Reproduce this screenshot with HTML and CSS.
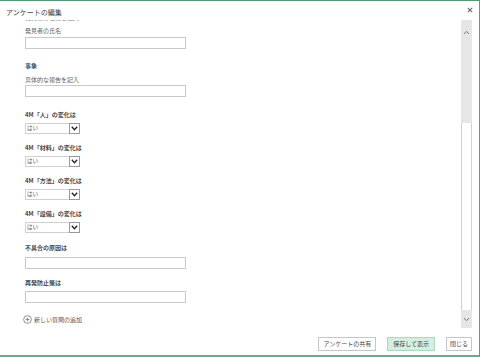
FILE: index.html
```html
<!DOCTYPE html>
<html lang="ja">
<head>
<meta charset="utf-8">
<title>アンケートの編集</title>
<link rel="stylesheet" href="styles.css">
</head>
<body>
<div class="dialog">
  <div class="header">
    <div class="title">アンケートの編集</div>
    <div class="close">
      <svg width="6" height="6" viewBox="0 0 6 6"><path d="M0.8 0.8 L5.2 5.2 M5.2 0.8 L0.8 5.2" stroke="#666" stroke-width="1.1" fill="none"/></svg>
    </div>
  </div>
  <div class="main">
    <div class="content">
      <div class="desc clipped">発見者の名前を記入</div>
      <div class="desc first">発見者の氏名</div>
      <div class="input m2"></div>

      <div class="label m13">事象</div>
      <div class="desc m6">具体的な報告を記入</div>
      <div class="input m1"></div>

      <div class="label m14">4M「人」の変化は</div>
      <div class="select"><span class="value">はい</span><span class="arrow"><svg width="7" height="5" viewBox="0 0 7 5"><path d="M0.8 0.8 L3.5 3.8 L6.2 0.8" stroke="#222" stroke-width="1.3" fill="none"/></svg></span></div>

      <div class="label m10">4M「材料」の変化は</div>
      <div class="select"><span class="value">はい</span><span class="arrow"><svg width="7" height="5" viewBox="0 0 7 5"><path d="M0.8 0.8 L3.5 3.8 L6.2 0.8" stroke="#222" stroke-width="1.3" fill="none"/></svg></span></div>

      <div class="label m10">4M「方法」の変化は</div>
      <div class="select"><span class="value">はい</span><span class="arrow"><svg width="7" height="5" viewBox="0 0 7 5"><path d="M0.8 0.8 L3.5 3.8 L6.2 0.8" stroke="#222" stroke-width="1.3" fill="none"/></svg></span></div>

      <div class="label m10">4M「設備」の変化は</div>
      <div class="select"><span class="value">はい</span><span class="arrow"><svg width="7" height="5" viewBox="0 0 7 5"><path d="M0.8 0.8 L3.5 3.8 L6.2 0.8" stroke="#222" stroke-width="1.3" fill="none"/></svg></span></div>

      <div class="label m11">不具合の原因は</div>
      <div class="input m5"></div>

      <div class="label m10">再発防止策は</div>
      <div class="input m4"></div>

      <div class="add m12">
        <svg width="9" height="9" viewBox="0 0 9 9"><circle cx="4.5" cy="4.5" r="3.9" stroke="#777" stroke-width="0.8" fill="none"/><path d="M4.5 2.6 V6.4 M2.6 4.5 H6.4" stroke="#777" stroke-width="0.8"/></svg>
        <span>新しい質問の追加</span>
      </div>
    </div>
    <div class="scrollbar">
      <div class="sb-top">
        <svg width="7" height="5" viewBox="0 0 7 5"><path d="M1 4 L3.5 1.3 L6 4" stroke="#777" stroke-width="1" fill="none"/></svg>
      </div>
      <div class="sb-track"></div>
      <div class="sb-bottom">
        <svg width="7" height="5" viewBox="0 0 7 5"><path d="M1 1 L3.5 3.7 L6 1" stroke="#777" stroke-width="1" fill="none"/></svg>
      </div>
    </div>
  </div>
  <div class="footer">
    <div class="btn share">アンケートの共有</div>
    <div class="btn save">保存して表示</div>
    <div class="btn close-btn">閉じる</div>
  </div>
</div>
</body>
</html>
```
FILE: styles.css
```css
html, body {
  margin: 0;
  padding: 0;
  background: #ffffff;
}
body {
  font-family: "Noto Sans CJK JP", "Noto Sans", sans-serif;
  color: #444;
}
.dialog {
  width: 480px;
  height: 357px;
  box-sizing: border-box;
  border-top: 1px solid #4f9a70;
  border-right: 1px solid #5aa079;
  border-bottom: 2px solid #6daa88;
  display: flex;
  flex-direction: column;
  overflow: hidden;
}
.header {
  height: 19px;
  display: flex;
  align-items: center;
  justify-content: space-between;
  padding: 0 6px 0 6px;
  flex: none;
}
.title {
  font-size: 7px;
  line-height: 9px;
  color: #444;
  margin-top: 3px;
}
.close {
  width: 6px;
  height: 6px;
  display: flex;
  margin-top: -1px;
}
.close svg { display: block; }
.main {
  flex: none;
  height: 308px;
  display: flex;
}
.content {
  flex: 1;
  overflow: hidden;
  padding-left: 25px;
  display: flex;
  flex-direction: column;
  align-items: flex-start;
}
.desc {
  font-size: 6px;
  line-height: 8px;
  color: #666;
  white-space: nowrap;
}
.label {
  font-size: 6px;
  line-height: 8px;
  font-weight: bold;
  color: #4a4a4a;
  white-space: nowrap;
}
.clipped { margin-top: -6px; color: #777; }
.first { margin-top: 5px; }
.m1 { margin-top: 1px; }
.m2 { margin-top: 2px; }
.m4 { margin-top: 4px; }
.m5 { margin-top: 5px; }
.m6 { margin-top: 6px; }
.m10 { margin-top: 10px; }
.m11 { margin-top: 11px; }
.m12 { margin-top: 12px; }
.m13 { margin-top: 13px; }
.m14 { margin-top: 14px; }
.input {
  width: 161px;
  height: 12px;
  box-sizing: border-box;
  border: 1px solid #c9c9c9;
  background: #fff;
  flex: none;
}
.select {
  margin-top: 4px;
  width: 55px;
  height: 11px;
  box-sizing: border-box;
  border: 1px solid #d0d0d0;
  display: flex;
  align-items: stretch;
  justify-content: space-between;
  flex: none;
}
.select .value {
  font-size: 5.5px;
  line-height: 9px;
  color: #555;
  padding-left: 1px;
}
.select .arrow {
  width: 11px;
  box-sizing: border-box;
  border: 1px solid #9a9a9a;
  margin: -1px -1px -1px 0;
  display: flex;
  align-items: center;
  justify-content: center;
  background: #fff;
}
.select .arrow svg { display: block; }
.add {
  display: flex;
  align-items: center;
  gap: 2px;
  margin-left: -2px;
  font-size: 6px;
  line-height: 8px;
  color: #555;
}
.add svg { display: block; }
.scrollbar {
  width: 11px;
  margin-right: 7px;
  display: flex;
  flex-direction: column;
  flex: none;
}
.sb-top {
  height: 103px;
  background: #e6e6e6;
  display: flex;
  justify-content: center;
  padding-top: 10px;
  box-sizing: border-box;
}
.sb-top svg, .sb-bottom svg { display: block; }
.sb-track {
  flex: 1;
  box-sizing: border-box;
  border: 1px solid #cfcfcf;
  border-top: none;
  border-bottom: none;
  background: #fff;
}
.sb-bottom {
  height: 18px;
  background: #e6e6e6;
  display: flex;
  justify-content: center;
  align-items: center;
}
.footer {
  flex: 1;
  display: flex;
  justify-content: flex-end;
  align-items: flex-start;
  gap: 11px;
  padding: 9px 7px 0 0;
}
.btn {
  height: 14px;
  box-sizing: border-box;
  border: 1px solid #c6c6c6;
  background: #fff;
  font-size: 6px;
  line-height: 12px;
  color: #444;
  padding: 0 4px;
  white-space: nowrap;
}
.btn.save {
  background: #d6eedf;
  border-color: #acd7be;
  padding: 0 5px;
}
.btn.close-btn { padding: 0 3px; }
```
